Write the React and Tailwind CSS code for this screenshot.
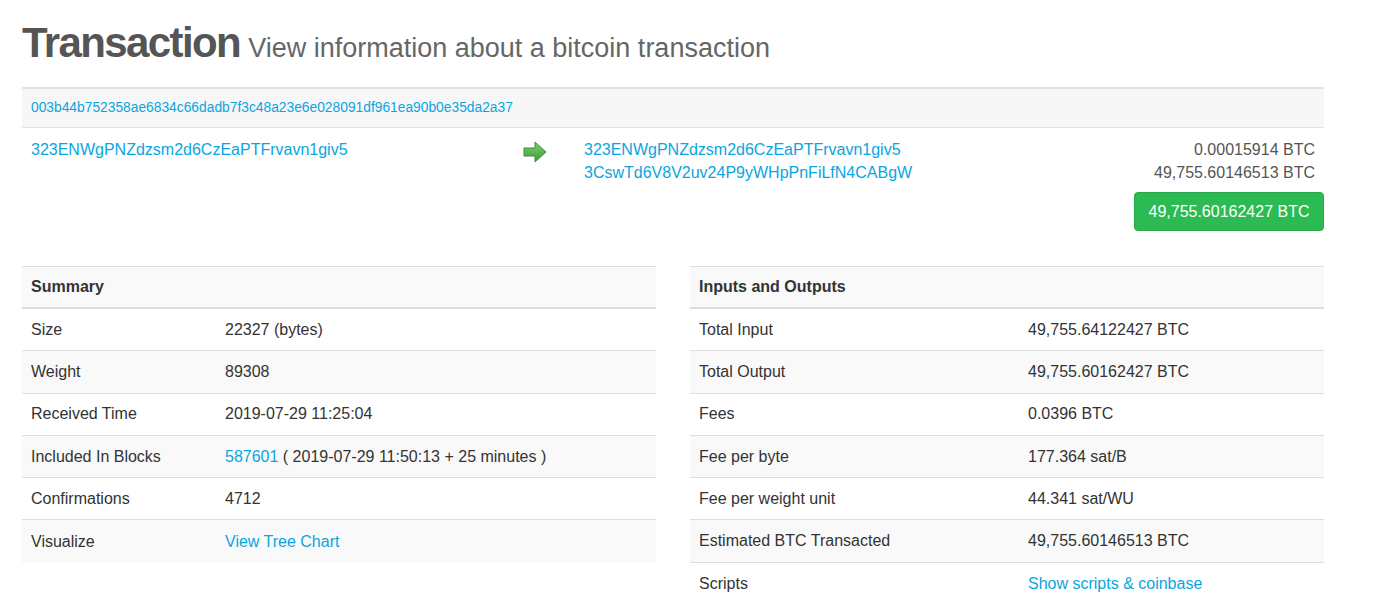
const summary = [
  ['Size', '22327 (bytes)'],
  ['Weight', '89308'],
  ['Received Time', '2019-07-29 11:25:04'],
  ['Included In Blocks', 'block'],
  ['Confirmations', '4712'],
  ['Visualize', 'tree'],
];

const io = [
  ['Total Input', '49,755.64122427 BTC'],
  ['Total Output', '49,755.60162427 BTC'],
  ['Fees', '0.0396 BTC'],
  ['Fee per byte', '177.364 sat/B'],
  ['Fee per weight unit', '44.341 sat/WU'],
  ['Estimated BTC Transacted', '49,755.60146513 BTC'],
  ['Scripts', 'scripts'],
];

function Arrow() {
  return (
    <svg width="24" height="22" viewBox="0 0 24 22">
      <defs>
        <linearGradient id="ag" x1="0" y1="0" x2="0" y2="1">
          <stop offset="0" stopColor="#7fcf6f" />
          <stop offset="1" stopColor="#3e9a3a" />
        </linearGradient>
      </defs>
      <path d="M1 7 H12 V1 L23 11 L12 21 V15 H1 Z" fill="url(#ag)" stroke="#3b8f35" strokeWidth="1" strokeLinejoin="round" />
    </svg>
  );
}

function renderValue(v) {
  if (v === 'block') {
    return (
      <span>
        <a className="text-[#0aa5e0]">587601</a> ( 2019-07-29 11:50:13 + 25 minutes )
      </span>
    );
  }
  if (v === 'tree') return <a className="text-[#0aa5e0]">View Tree Chart</a>;
  if (v === 'scripts') return <a className="text-[#0aa5e0]">Show scripts &amp; coinbase</a>;
  return v;
}

function Table({ title, rows, labelWidth }) {
  return (
    <div className="w-[634px] border-t border-[#dddddd]">
      <div className="h-[42px] flex items-center px-[9px] bg-[#f9f9f9] font-bold text-[#333] border-b-2 border-[#dddddd]">
        {title}
      </div>
      {rows.map(([k, v], i) => (
        <div
          key={k}
          className={`h-[42.3px] flex items-center ${i < rows.length - 1 ? 'border-b border-[#dddddd]' : ''} ${i % 2 === 1 ? 'bg-[#f9f9f9]' : 'bg-white'}`}
        >
          <div className={`${labelWidth} px-[9px] shrink-0`}>{k}</div>
          <div className="px-[9px]">{renderValue(v)}</div>
        </div>
      ))}
    </div>
  );
}

export default function App() {
  return (
    <div className="min-h-screen bg-white text-[#333] text-[16px]" style={{ fontFamily: "'Liberation Sans', Arial, sans-serif" }}>
      <div className="w-[1302px] ml-[22px]">
        <div className="pt-[22px] h-[87px] flex items-baseline gap-[8px] whitespace-nowrap">
          <h1 className="text-[42px] font-bold tracking-[-1.6px] text-[#555] leading-none">Transaction</h1>
          <span className="text-[27px] text-[#666] leading-none">View information about a bitcoin transaction</span>
        </div>

        <div className="h-[41px] flex items-center px-[9px] bg-[#f7f7f7] border-t-2 border-b border-[#e3e3e3] text-[13.8px] text-[#0aa5e0]">
          003b44b752358ae6834c66dadb7f3c48a23e6e028091df961ea90b0e35da2a37
        </div>

        <div className="flex pt-[10px] h-[138px]">
          <div className="w-[501px] pl-[9px] text-[#0aa5e0] leading-[23px]">323ENWgPNZdzsm2d6CzEaPTFrvavn1giv5</div>
          <div className="w-[61px] pt-[3px]">
            <Arrow />
          </div>
          <div className="flex-1 flex flex-col">
            <div className="flex justify-between pr-[9px] leading-[23px]">
              <div className="text-[#0aa5e0]">
                <div>323ENWgPNZdzsm2d6CzEaPTFrvavn1giv5</div>
                <div>3CswTd6V8V2uv24P9yWHpPnFiLfN4CABgW</div>
              </div>
              <div className="text-right text-[#555]">
                <div>0.00015914 BTC</div>
                <div>49,755.60146513 BTC</div>
              </div>
            </div>
            <div className="flex justify-end mt-[8px]">
              <div className="h-[39px] w-[190px] flex items-center justify-center rounded-[4px] bg-[#2cba52] border border-[#28a84a] text-white">
                49,755.60162427 BTC
              </div>
            </div>
          </div>
        </div>

        <div className="flex justify-between items-start">
          <Table title="Summary" rows={summary} labelWidth="w-[194px]" />
          <Table title="Inputs and Outputs" rows={io} labelWidth="w-[329px]" />
        </div>
      </div>
    </div>
  );
}
